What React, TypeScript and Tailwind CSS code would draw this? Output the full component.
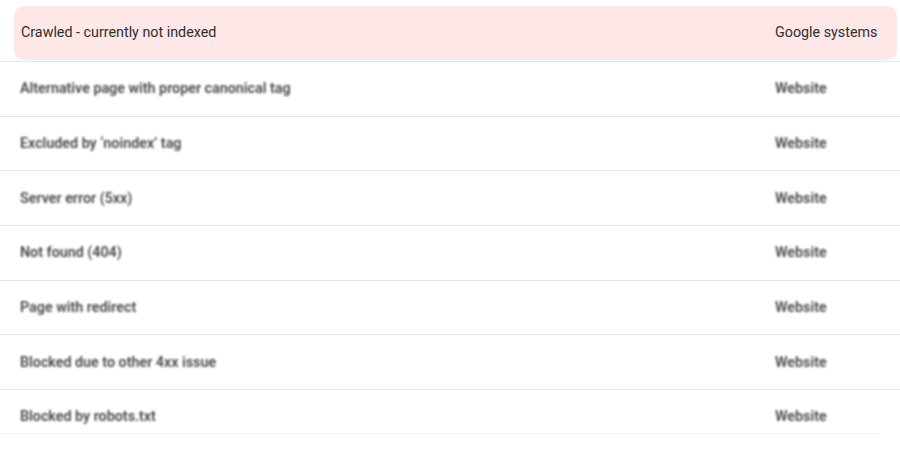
const rows = [
  "Alternative page with proper canonical tag",
  "Excluded by ‘noindex’ tag",
  "Server error (5xx)",
  "Not found (404)",
  "Page with redirect",
  "Blocked due to other 4xx issue",
  "Blocked by robots.txt",
];

export default function App() {
  return (
    <div className="h-[450px] w-[900px] overflow-hidden bg-white pt-[6px] font-['Roboto',sans-serif]">
      <div className="ml-[14px] mr-[3px] grid h-[54px] grid-cols-[1fr_122px] items-center rounded-[10px] bg-[#fde7e7] pl-[7px] text-[14.3px] text-[#2f2f2f]">
        <span>Crawled - currently not indexed</span>
        <span>Google systems</span>
      </div>
      <div className="mt-[1px] border-t border-[#e6e6e6]">
        {rows.map((label, i) => (
          <div
            key={label}
            className={
              "border-b " +
              (i === rows.length - 1 ? "mr-[20px] border-[#f3f3f3]" : "border-[#e6e6e6]")
            }
          >
            <div
              className={
                "grid grid-cols-[1fr_125px] items-center pl-[20px] text-[14.3px] font-semibold text-[#484848] blur-[0.8px] " +
                (i === rows.length - 1 ? "mr-[-20px] h-[43px] pt-[10px]" : "h-[53.7px]")
              }
            >
              <span>{label}</span>
              <span>Website</span>
            </div>
          </div>
        ))}
      </div>
    </div>
  );
}
